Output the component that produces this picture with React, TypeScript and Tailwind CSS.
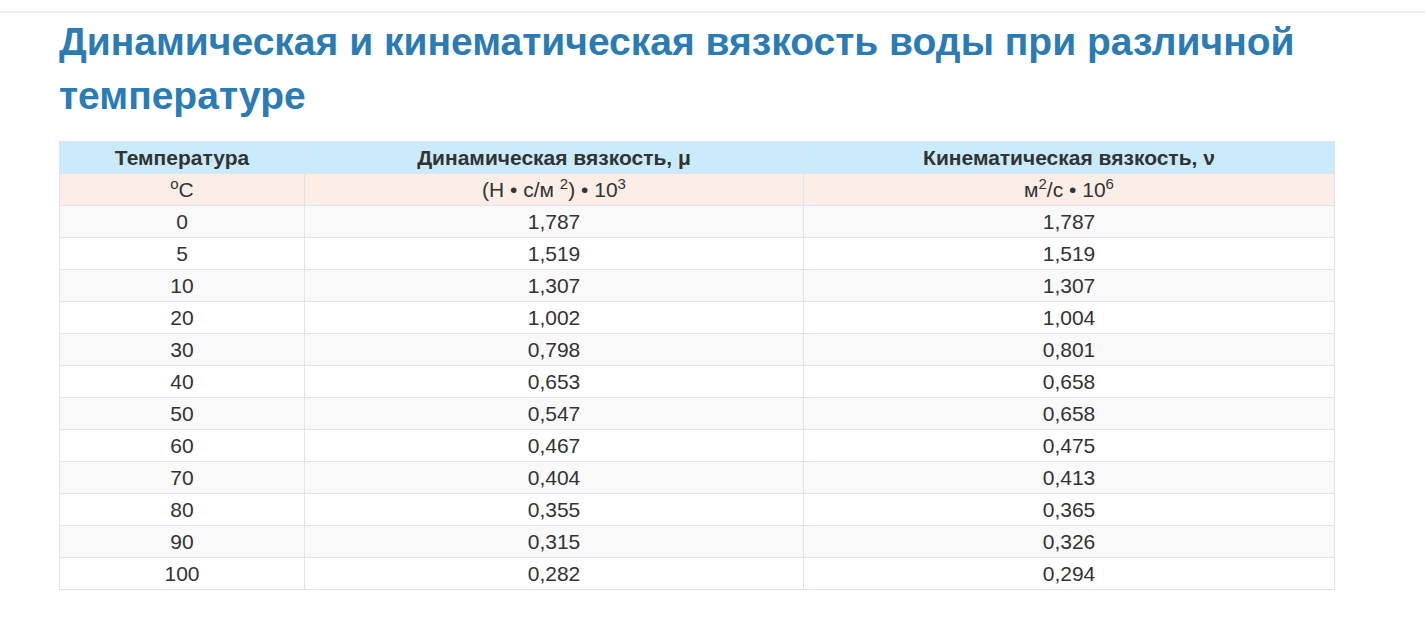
const rows: [string, string, string][] = [
  ["0", "1,787", "1,787"],
  ["5", "1,519", "1,519"],
  ["10", "1,307", "1,307"],
  ["20", "1,002", "1,004"],
  ["30", "0,798", "0,801"],
  ["40", "0,653", "0,658"],
  ["50", "0,547", "0,658"],
  ["60", "0,467", "0,475"],
  ["70", "0,404", "0,413"],
  ["80", "0,355", "0,365"],
  ["90", "0,315", "0,326"],
  ["100", "0,282", "0,294"],
];

const cell = "border border-[#dde3ef] h-8 p-0 text-center align-middle";

export default function App() {
  return (
    <div className="min-h-screen bg-white text-[#333] font-['Liberation_Sans',Arial,sans-serif]">
      {/* thin rule at the top */}
      <div className="h-[13px] border-b-2 border-[#eeeeee]" />
      <div className="pl-[59px] pr-[90px] pt-[2px]">
        <h1 className="text-[39px] leading-[54px] font-bold text-[#2b7bb5]">
          Динамическая и кинематическая вязкость воды при различной температуре
        </h1>
        <table className="mt-[18px] w-[1276px] border-collapse text-[21px] leading-6">
          <thead>
            <tr className="bg-[#c9ebfb] font-bold">
              <th className={`${cell} w-[245px]`}>Температура</th>
              <th className={`${cell} w-[499px]`}>Динамическая вязкость, μ</th>
              <th className={cell}>Кинематическая вязкость, ν</th>
            </tr>
          </thead>
          <tbody>
            <tr className="bg-[#faeee6]">
              <td className={cell}>
                <sup className="text-[15px]">o</sup>C
              </td>
              <td className={cell}>
                (Н • с/м <sup className="text-[15px]">2</sup>) • 10<sup className="text-[15px]">3</sup>
              </td>
              <td className={cell}>
                м<sup className="text-[15px]">2</sup>/с • 10<sup className="text-[15px]">6</sup>
              </td>
            </tr>
            {rows.map((r, i) => (
              <tr key={r[0]} className={i % 2 === 0 ? "bg-[#f9f9f9]" : "bg-white"}>
                <td className={cell}>{r[0]}</td>
                <td className={cell}>{r[1]}</td>
                <td className={cell}>{r[2]}</td>
              </tr>
            ))}
          </tbody>
        </table>
      </div>
    </div>
  );
}
